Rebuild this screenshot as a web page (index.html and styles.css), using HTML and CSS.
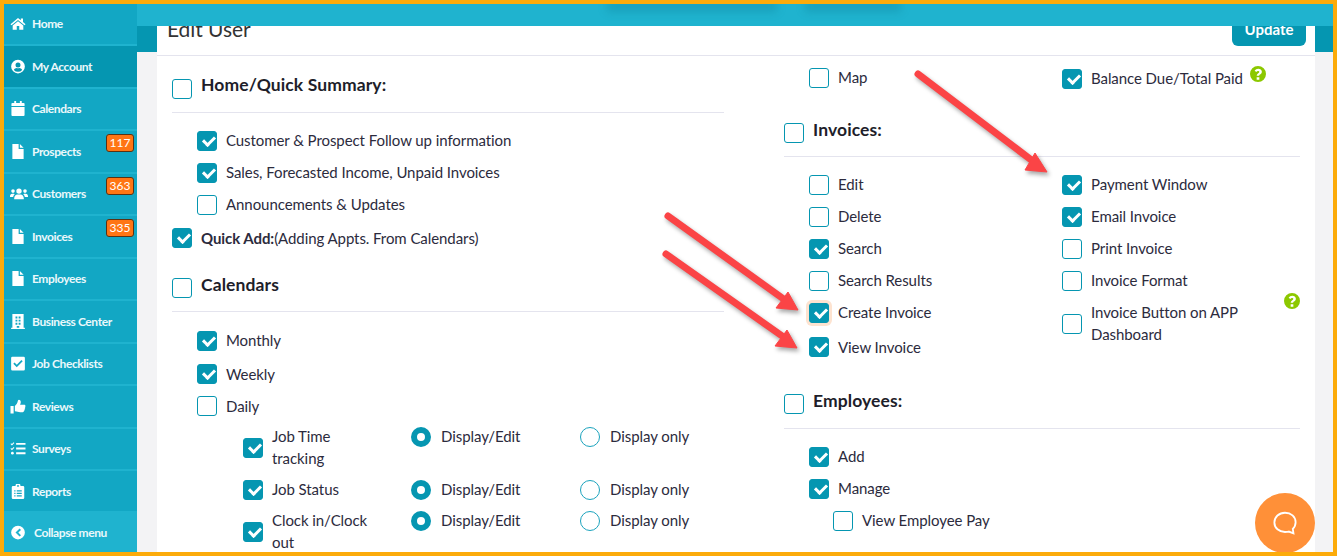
FILE: index.html
```html
<!DOCTYPE html>
<html lang="en">
<head>
    <meta charset="UTF-8">
    <title>Edit User</title>
    <link rel="stylesheet" href="styles.css">
</head>
<body>
    <svg class="defs" aria-hidden="true">
        <symbol id="i-home" viewBox="0 0 24 24"><path d="M12 3 0 13l1.6 1.9L12 6.2l10.4 8.7L24 13l-4-3.3V4h-3.5v2.8zM12 8.2 3.5 15.300V22H10v-6h4v6h6.500v-6.700z"/></symbol>
        <symbol id="i-user" viewBox="0 0 24 24"><path fill-rule="evenodd" d="M12 1a11 11 0 1 0 0 22 11 11 0 0 0 0-22zm0 4.500a4 4 0 1 1 0 8 4 4 0 0 1 0-8zm0 15a8.500 8.500 0 0 1-6.600-3.100c.9-1.700 2.700-2.900 4.600-2.900.6 0 1.200.4 2 .4s1.400-.4 2-.4c1.900 0 3.700 1.200 4.600 2.900a8.500 8.500 0 0 1-6.600 3.100z"/></symbol>
        <symbol id="i-cal" viewBox="0 0 24 24"><path d="M6 0h3v3h6V0h3v3h3a1.500 1.500 0 0 1 1.500 1.500V8h-21V4.500A1.500 1.500 0 0 1 3 3h3zM1.500 9.500h21v13A1.500 1.500 0 0 1 21 24H3a1.500 1.500 0 0 1-1.500-1.500z"/></symbol>
        <symbol id="i-file" viewBox="0 0 24 24"><path d="M3 0h10v8h8v16H3zM15 0l6 6h-6z"/></symbol>
        <symbol id="i-users" viewBox="0 0 30 24"><circle cx="15" cy="8" r="4.500"/><circle cx="5" cy="8" r="3"/><circle cx="25" cy="8" r="3"/><path d="M7 20c0-4 3-6.500 5-6.500h6c2 0 5 2.500 5 6.500v1.500H7zM0 17c0-3 1.500-4.500 3.500-4.500h3l1.500.8C6.500 14.500 5.500 16 5.300 18H0zM30 17c0-3-1.500-4.500-3.500-4.500h-3l-1.500.8c1.500 1.200 2.500 2.700 2.700 4.700H30z"/></symbol>
        <symbol id="i-building" viewBox="0 0 24 24"><path fill-rule="evenodd" d="M3 0h18v22h2v2H1v-2h2zm5 4v3h3V4zm5 0v3h3V4zM8 9v3h3V9zm5 0v3h3V9zm-5 5v3h3v-3zm5 0v3h3v-3zm-3 5v3h4v-3z"/></symbol>
        <symbol id="i-check" viewBox="0 0 24 24"><path fill-rule="evenodd" d="M3 1h18a2 2 0 0 1 2 2v18a2 2 0 0 1-2 2H3a2 2 0 0 1-2-2V3a2 2 0 0 1 2-2zm7 17 9.500-9.500L17.500 6.500 10 14l-3.500-3.500-2 2z"/></symbol>
        <symbol id="i-thumb" viewBox="0 0 24 24"><path d="M0 11h5v12H0zM7 11c2-2 4-4 4.500-7 .2-1.500.8-3 2-3 2 0 3 2 3 4 0 1.500-.7 3-1.200 4H22c1.200 0 2 1 2 2 0 .8-.4 1.500-1 1.800.5.500.7 1 .6 1.700-.1.700-.5 1.200-1.100 1.500.3.500.4 1 .2 1.600-.2.600-.6 1-1.200 1.200.1 1.300-.7 2.200-2 2.200h-4c-3 0-5-1-8.500-1.500z"/></symbol>
        <symbol id="i-tasks" viewBox="0 0 24 24"><path d="M9 3h15v3H9zM9 10.500h15v3H9zM9 18h15v3H9zM1 3.500l1.300 1.200L5 2l1.200 1.200-3.900 3.900L0 4.800zM1 11l1.300 1.200L5 9.500l1.200 1.200-3.900 3.900L0 12.300z"/><circle cx="3" cy="19.500" r="2.200"/></symbol>
        <symbol id="i-clip" viewBox="0 0 24 24"><path fill-rule="evenodd" d="M4 3h4a4 4 0 0 1 8 0h4a2 2 0 0 1 2 2v17a2 2 0 0 1-2 2H4a2 2 0 0 1-2-2V5a2 2 0 0 1 2-2zm8-1.500a1.500 1.500 0 1 0 0 3 1.500 1.500 0 0 0 0-3zM6 10v2h2v-2zm4 0v2h8v-2zm-4 4v2h2v-2zm4 0v2h8v-2zm-4 4v2h2v-2zm4 0v2h8v-2z"/></symbol>
        <symbol id="i-back" viewBox="0 0 24 24"><path fill-rule="evenodd" d="M12 1a11 11 0 1 0 0 22 11 11 0 0 0 0-22zm2.500 4.500 2.300 2.300-4.300 4.200 4.300 4.200-2.300 2.300L8 12z"/></symbol>
        <symbol id="i-help" viewBox="0 0 24 24"><path fill-rule="evenodd" d="M12 0a12 12 0 1 0 0 24 12 12 0 0 0 0-24zm-2 17h4v3.500h-4zm0-2.500c0-3 4-3.500 4-5.500 0-1-1-1.500-2-1.500s-1.800.6-2.500 1.500L7 7.200C8.200 5.300 10 4 12.300 4c2.900 0 5.500 1.800 5.500 4.800 0 3.700-4 4-4 5.700z"/></symbol>
    </svg>

    <div class="frame">
        <aside class="sidebar">
            <nav class="menu">
                <a class="menu-item"><svg class="ico"><use href="#i-home"/></svg>Home</a>
                <a class="menu-item active"><svg class="ico"><use href="#i-user"/></svg>My Account</a>
                <a class="menu-item"><svg class="ico"><use href="#i-cal"/></svg>Calendars</a>
                <a class="menu-item"><svg class="ico"><use href="#i-file"/></svg>Prospects<span class="badge">117</span></a>
                <a class="menu-item"><svg class="ico wide"><use href="#i-users"/></svg>Customers<span class="badge">363</span></a>
                <a class="menu-item"><svg class="ico"><use href="#i-file"/></svg>Invoices<span class="badge">335</span></a>
                <a class="menu-item"><svg class="ico"><use href="#i-file"/></svg>Employees</a>
                <a class="menu-item"><svg class="ico"><use href="#i-building"/></svg>Business Center</a>
                <a class="menu-item"><svg class="ico"><use href="#i-check"/></svg>Job Checklists</a>
                <a class="menu-item"><svg class="ico"><use href="#i-thumb"/></svg>Reviews</a>
                <a class="menu-item"><svg class="ico"><use href="#i-tasks"/></svg>Surveys</a>
                <a class="menu-item"><svg class="ico"><use href="#i-clip"/></svg>Reports</a>
            </nav>
            <a class="collapse"><svg class="ico"><use href="#i-back"/></svg>Collapse menu</a>
        </aside>

        <main class="main">
            <div class="topbar"></div>
            <div class="content">
                <section class="card">
                    <header class="card-head">
                        <h1>Edit User</h1>
                        <button class="update">Update</button>
                    </header>
                    <div class="card-body">
                        <div class="col-left">
                            <div class="sec-head first"><span class="cb"></span><h2>Home/Quick Summary:</h2></div>
                            <div class="rows indent top12">
                                <div class="row"><span class="cb on"></span>Customer &amp; Prospect Follow up information</div>
                                <div class="row"><span class="cb on"></span>Sales, Forecasted Income, Unpaid Invoices</div>
                                <div class="row"><span class="cb"></span>Announcements &amp; Updates</div>
                            </div>
                            <div class="row quick low"><span class="cb on"></span><span><b>Quick Add:</b>(Adding Appts. From Calendars)</span></div>
                            <div class="sec-head cal"><span class="cb"></span><h2>Calendars</h2></div>
                            <div class="rows indent top13">
                                <div class="row"><span class="cb on"></span>Monthly</div>
                                <div class="row tight low"><span class="cb on"></span>Weekly</div>
                                <div class="row low"><span class="cb"></span>Daily</div>
                            </div>
                            <div class="subs">
                                <div class="sub">
                                    <span class="cb on"></span><span class="sub-label">Job Time tracking</span>
                                    <span class="opt"><span class="radio on"></span>Display/Edit</span>
                                    <span class="opt"><span class="radio"></span>Display only</span>
                                </div>
                                <div class="sub">
                                    <span class="cb on"></span><span class="sub-label">Job Status</span>
                                    <span class="opt"><span class="radio on"></span>Display/Edit</span>
                                    <span class="opt"><span class="radio"></span>Display only</span>
                                </div>
                                <div class="sub">
                                    <span class="cb on"></span><span class="sub-label">Clock in/Clock out</span>
                                    <span class="opt"><span class="radio on"></span>Display/Edit</span>
                                    <span class="opt"><span class="radio"></span>Display only</span>
                                </div>
                            </div>
                        </div>

                        <div class="col-right">
                            <div class="pair map-row">
                                <div class="row"><span class="cb"></span>Map</div>
                                <div class="row nudge"><span class="cb on"></span>Balance Due/Total Paid<svg class="help inline"><use href="#i-help"/></svg></div>
                            </div>
                            <div class="sec-head inv"><span class="cb"></span><h2>Invoices:</h2></div>
                            <div class="pair top12">
                                <div class="rows">
                                    <div class="row"><span class="cb"></span>Edit</div>
                                    <div class="row"><span class="cb"></span>Delete</div>
                                    <div class="row"><span class="cb on"></span>Search</div>
                                    <div class="row"><span class="cb"></span>Search Results</div>
                                    <div class="row"><span class="cb on glow"></span>Create Invoice</div>
                                    <div class="row view low"><span class="cb on"></span>View Invoice</div>
                                </div>
                                <div class="rows">
                                    <div class="row"><span class="cb on"></span>Payment Window</div>
                                    <div class="row"><span class="cb on"></span>Email Invoice</div>
                                    <div class="row"><span class="cb"></span>Print Invoice</div>
                                    <div class="row"><span class="cb"></span>Invoice Format</div>
                                    <div class="row two-line"><span class="cb"></span><span>Invoice Button on APP Dashboard</span><svg class="help corner"><use href="#i-help"/></svg></div>
                                </div>
                            </div>
                            <div class="sec-head emp"><span class="cb"></span><h2>Employees:</h2></div>
                            <div class="rows indent top12">
                                <div class="row"><span class="cb on"></span>Add</div>
                                <div class="row"><span class="cb on"></span>Manage</div>
                                <div class="row deeper"><span class="cb"></span>View Employee Pay</div>
                            </div>
                        </div>
                    </div>
                </section>
            </div>
        </main>

        <!-- red annotation arrows drawn over the screenshot, frame coordinates -->
        <svg class="arrows" viewBox="0 0 1337 556">
            <g fill="#fb4446" stroke="#fb4446">
                <line x1="918" y1="74" x2="1034" y2="162" stroke-width="7" stroke-linecap="round"/>
                <polygon points="1047,172 1025,170 1035,153" stroke-width="1"/>
                <line x1="668" y1="216" x2="785" y2="300" stroke-width="7" stroke-linecap="round"/>
                <polygon points="798,310 776,308 788,292" stroke-width="1"/>
                <line x1="666" y1="254" x2="785" y2="338" stroke-width="7" stroke-linecap="round"/>
                <polygon points="797,348 775,346 787,330" stroke-width="1"/>
            </g>
        </svg>

        <button class="chat">
            <svg viewBox="0 0 24 24" width="26" height="26"><path fill="none" stroke="#fff" stroke-width="1.700" d="M12 2.500c5.500 0 9.800 3.700 9.800 8.800 0 2.600-1 4.600-2.600 6.100l.6 4.100-4.300-1.600c-1.100.3-2.300.4-3.500.4-5.500 0-9.800-3.700-9.800-8.800S6.500 2.500 12 2.500z"/></svg>
        </button>
    </div>
</body>
</html>
```

FILE: styles.css
```css
* { box-sizing: border-box; }
html, body { margin: 0; height: 100%; }
body {
    font-family: Lato, "Noto Sans", sans-serif;
    font-size: 15px;
    letter-spacing: -0.07px;
    color: #2c2b3d;
    overflow: hidden;
}
.defs { display: none; }

.frame {
    position: relative;
    display: flex;
    height: 556px;
    border: 4px solid #fcab0a;
    overflow: hidden;
    background: #f3f3f5;
}

/* sidebar */
.sidebar {
    flex: 0 0 133px;
    display: flex;
    flex-direction: column;
    background: #12a7c4;
    color: #eaf8fb;
    font-size: 12px;
    font-weight: 700;
    letter-spacing: -0.4px;
}
.menu { flex: 1; margin-top: -0.5px; overflow: hidden; }
.menu-item {
    position: relative;
    display: flex;
    align-items: center;
    height: 42.5px;
    padding-left: 6px;
    border-bottom: 2px solid #1fb3cf;
}
.menu-item.active { background: #0596b1; }
.ico {
    flex: 0 0 16px;
    width: 16px;
    height: 15px;
    margin-right: 6px;
    fill: #fff;
}
.ico.wide { flex-basis: 18px; width: 18px; margin-right: 4px; }
.badge {
    position: absolute;
    top: 3px;
    right: 3px;
    width: 28px;
    height: 18px;
    border: 1px solid #5a3212;
    border-radius: 3px;
    background: #ff7514;
    color: #fff;
    font-size: 12px;
    font-weight: 400;
    letter-spacing: 0;
    line-height: 16px;
    text-align: center;
}
.collapse {
    flex: 0 0 41px;
    display: flex;
    align-items: center;
    padding: 2px 0 0 6px;
    background: #1fb3cf;
}
.collapse .ico { margin-right: 8px; }

/* main area */
.main { flex: 1; min-width: 0; display: flex; flex-direction: column; }
.topbar {
    position: relative;
    flex: 0 0 22px;
    background: #1fb3cf;
    overflow: hidden;
}
/* faint smudges left in the top bar */
.topbar::before,
.topbar::after {
    content: "";
    position: absolute;
    top: -4px;
    height: 12px;
    background: rgba(0, 90, 110, 0.2);
    filter: blur(4px);
}
.topbar::before { left: 470px; width: 170px; }
.topbar::after { left: 668px; width: 96px; }
.content {
    flex: 1;
    min-height: 0;
    padding: 0 18px 0 20px;
    background: linear-gradient(#0596b1 26px, #f3f3f5 26px);
}
.card { background: #fff; height: 600px; }
.card-head {
    display: flex;
    justify-content: space-between;
    align-items: flex-end;
    height: 30px;
    padding: 0 9px 0 10px;
    border-bottom: 1px solid #e4e4ee;
    overflow: hidden;
}
.card-head h1 {
    margin: 0 0 13px;
    font-size: 21px;
    font-weight: 400;
    line-height: 26px;
    color: #333;
}
.update {
    height: 32px;
    width: 74px;
    margin-bottom: 9px;
    padding: 0 0 3px;
    border: none;
    border-radius: 0 0 6px 6px;
    background: #0596b1;
    color: #fff;
    font-family: inherit;
    font-size: 15px;
    font-weight: 700;
}
.card-body {
    display: grid;
    grid-template-columns: 552px 516px;
    column-gap: 60px;
    padding-left: 15px;
}

/* checkboxes and rows */
.cb {
    flex: 0 0 20px;
    position: relative;
    width: 20px;
    height: 20px;
    margin-top: 2px;
    border: 1px solid #0596b1;
    border-radius: 3px;
    background: #fff;
}
.cb.on { background: #0596b1; }
.cb.on::after {
    content: "";
    position: absolute;
    left: 5px;
    top: 4px;
    width: 9px;
    height: 5px;
    border-left: 3px solid #fff;
    border-bottom: 3px solid #fff;
    transform: rotate(-45deg);
}
.cb.glow { box-shadow: 0 0 0 3px #fde3d0; }
.row {
    display: flex;
    align-items: center;
    gap: 9px;
    height: 32px;
    padding-bottom: 2px;
}
.row.low { padding-bottom: 0; }
.row.low .cb { margin: 0 0 0; }
.indent { padding-left: 25px; }
.top13 { margin-top: 13px; }
.top12 { margin-top: 12px; }
.tight { margin-top: 1px; }
.quick { margin-top: 1px; }
.sec-head {
    display: flex;
    align-items: flex-start;
    gap: 9px;
    height: 34px;
    border-bottom: 1px solid #e4e4ee;
}
.sec-head .cb { margin-top: 0; }
.sec-head h2 {
    margin: -4px 0 0;
    font-size: 17.5px;
    font-weight: 700;
    letter-spacing: 0.1px;
    line-height: 22px;
    color: #1e1e2a;
}
.sec-head.first { margin-top: 23px; }
.sec-head.first h2 { margin-top: -5px; }
.sec-head.cal { margin-top: 24px; }
.sec-head.inv { margin-top: 29px; }
.sec-head.emp { margin-top: 31px; height: 35px; }

/* daily sub options */
.subs { margin-top: 4px; padding-left: 71px; }
.sub {
    display: grid;
    grid-template-columns: 29px 139px 169px 1fr;
    align-items: start;
    margin-bottom: 9px;
    line-height: 22px;
}
.sub > .cb { align-self: center; margin-top: 0; }
.sub-label { width: 105px; margin: -1px 0 1px; }
.opt { display: flex; align-items: flex-start; gap: 10px; line-height: 20px; }
.radio {
    flex: 0 0 20px;
    width: 20px;
    height: 20px;
    margin-top: 1px;
    border: 1px solid #1ba3bd;
    border-radius: 50%;
}
.radio.on { border: 6px solid #0596b1; }

/* right column */
.pair { display: grid; grid-template-columns: 253px 253px; padding-left: 25px; }
.map-row { margin-top: 6px; }
.nudge { position: relative; top: 1px; }
.view { margin-top: 2px; }
.two-line {
    position: relative;
    height: 44px;
    margin-top: 5px;
    line-height: 22px;
}
.two-line > span:not(.cb) { width: 165px; }
.deeper { padding-left: 24px; }
.help { width: 16px; height: 16px; fill: #8cc800; }
.help.inline { margin: -9px 0 0 -2px; }
.help.corner { position: absolute; left: 222px; top: -9px; }

/* overlays */
.arrows {
    position: absolute;
    left: -4px;
    top: -4px;
    width: 1337px;
    height: 556px;
    pointer-events: none;
    filter: drop-shadow(2px 3px 2px rgba(0, 0, 0, 0.35));
}
.chat {
    position: absolute;
    right: 18px;
    bottom: -1px;
    display: flex;
    align-items: center;
    justify-content: center;
    width: 60px;
    height: 60px;
    padding: 0;
    border: none;
    border-radius: 50%;
    background: #ff9038;
}
```
